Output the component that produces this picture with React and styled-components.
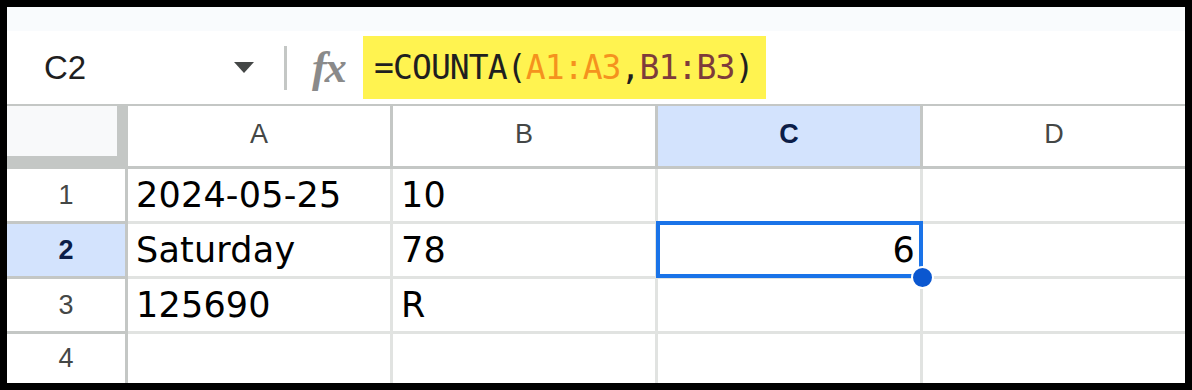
import React from 'react';
import styled, { createGlobalStyle, css } from 'styled-components';

const GlobalStyle = createGlobalStyle`
  html, body {
    margin: 0;
    padding: 0;
    background: #000000;
  }
  * {
    box-sizing: border-box;
  }
`;

const Frame = styled.div`
  margin: 7px;
  width: 1178px;
  height: 376px;
  background: #ffffff;
  display: flex;
  flex-direction: column;
  overflow: hidden;
`;

const TopStrip = styled.div`
  height: 24px;
  background: #f9fbfd;
`;

const FormulaBar = styled.div`
  height: 75px;
  display: flex;
  align-items: center;
  background: #ffffff;
  border-bottom: 2px solid #c4c7c5;
`;

const NameBox = styled.div`
  width: 277px;
  padding: 0 30px 0 37px;
  display: flex;
  align-items: center;
  justify-content: space-between;
  font-family: 'Liberation Sans', Arial, sans-serif;
  font-size: 33px;
  color: #1f1f1f;
`;

const Caret = styled.span`
  width: 0;
  height: 0;
  border-left: 10.5px solid transparent;
  border-right: 10.5px solid transparent;
  border-top: 11px solid #444746;
`;

const Divider = styled.div`
  width: 3px;
  height: 44px;
  background: #c4c7c5;
`;

const FxIcon = styled.span`
  margin-left: 25px;
  width: 51px;
  font-family: 'Liberation Serif', 'Times New Roman', serif;
  font-style: italic;
  font-weight: 700;
  font-size: 44px;
  line-height: 1;
  color: #8a8a8a;
  letter-spacing: -2px;
`;

const FormulaHighlight = styled.div`
  height: 63px;
  padding: 0 13px 0 11px;
  display: flex;
  align-items: center;
  background: #fff350;
  font-family: 'DejaVu Sans Mono', 'Liberation Mono', monospace;
  font-size: 33px;
  letter-spacing: -0.9px;
  color: #1f1f1f;
  white-space: pre;
`;

const Token = styled.span`
  color: ${(p) => p.$color || '#1f1f1f'};
`;

const Grid = styled.div`
  flex: 1;
  display: grid;
  grid-template-columns: 121px 265px 265px 265px 1fr;
  grid-template-rows: 63px 55px 55px 55px 1fr;
`;

const Corner = styled.div`
  background: #f8f9fa;
  border-right: 11px solid #c4c7c5;
  border-bottom: 13px solid #c4c7c5;
`;

const headerText = css`
  display: flex;
  align-items: center;
  justify-content: center;
  font-family: 'Liberation Sans', Arial, sans-serif;
  font-size: 27px;
  color: #444746;
  border-right: 3px solid #c4c7c5;
  border-bottom: 3px solid #c4c7c5;

  ${(p) =>
    p.$active &&
    css`
      background: #d3e3fd;
      color: #0b1d48;
      font-weight: 700;
    `}
`;

const ColHeader = styled.div`
  ${headerText}
  padding-bottom: 3px;
  ${(p) => p.$last && 'border-right: none;'}
`;

const RowHeader = styled.div`
  ${headerText}
  ${(p) => p.$last && 'border-bottom: none;'}
`;

const Cell = styled.div`
  position: relative;
  display: flex;
  align-items: center;
  justify-content: ${(p) => (p.$right ? 'flex-end' : 'flex-start')};
  padding: ${(p) => (p.$right ? '0 5px 0 0' : '0 0 0 8px')};
  font-family: 'DejaVu Sans', Verdana, sans-serif;
  font-size: 35px;
  letter-spacing: 0.2px;
  color: #000000;
  border-right: ${(p) => (p.$lastCol ? 'none' : '3px solid #e1e3e1')};
  border-bottom: ${(p) => (p.$lastRow ? 'none' : '3px solid #e1e3e1')};
`;

const Selection = styled.div`
  position: absolute;
  top: -3px;
  left: -2px;
  right: -3px;
  bottom: -2px;
  border: 4px solid #1a73e8;
  z-index: 1;
  pointer-events: none;
`;

const FillHandle = styled.div`
  position: absolute;
  right: -14px;
  bottom: -13px;
  width: 23px;
  height: 23px;
  border-radius: 50%;
  background: #0b57d0;
  border: 2px solid #ffffff;
  z-index: 2;
`;

const columns = ['A', 'B', 'C', 'D'];

const rows = [
  ['2024-05-25', '10', '', ''],
  ['Saturday', '78', '6', ''],
  ['125690', 'R', '', ''],
  ['', '', '', ''],
];

const activeCol = 2;
const activeRow = 1;

const App = () => {
  return (
    <>
      <GlobalStyle />
      <Frame>
        <TopStrip />
        <FormulaBar>
          <NameBox>
            <span>C2</span>
            <Caret />
          </NameBox>
          <Divider />
          <FxIcon>fx</FxIcon>
          <FormulaHighlight>
            <Token>=COUNTA(</Token>
            <Token $color="#f5921e">A1:A3</Token>
            <Token>,</Token>
            <Token $color="#7e3b3b">B1:B3</Token>
            <Token>)</Token>
          </FormulaHighlight>
        </FormulaBar>
        <Grid>
          <Corner />
          {columns.map((c, i) => (
            <ColHeader key={c} $active={i === activeCol} $last={i === columns.length - 1}>
              {c}
            </ColHeader>
          ))}
          {rows.map((row, r) => (
            <React.Fragment key={r}>
              <RowHeader $active={r === activeRow} $last={r === rows.length - 1}>
                {r + 1}
              </RowHeader>
              {row.map((value, c) => {
                const selected = r === activeRow && c === activeCol;
                return (
                  <Cell
                    key={c}
                    $right={selected}
                    $lastCol={c === columns.length - 1}
                    $lastRow={r === rows.length - 1}
                  >
                    {value}
                    {selected && (
                      <>
                        <Selection />
                        <FillHandle />
                      </>
                    )}
                  </Cell>
                );
              })}
            </React.Fragment>
          ))}
        </Grid>
      </Frame>
    </>
  );
};

export default App;
